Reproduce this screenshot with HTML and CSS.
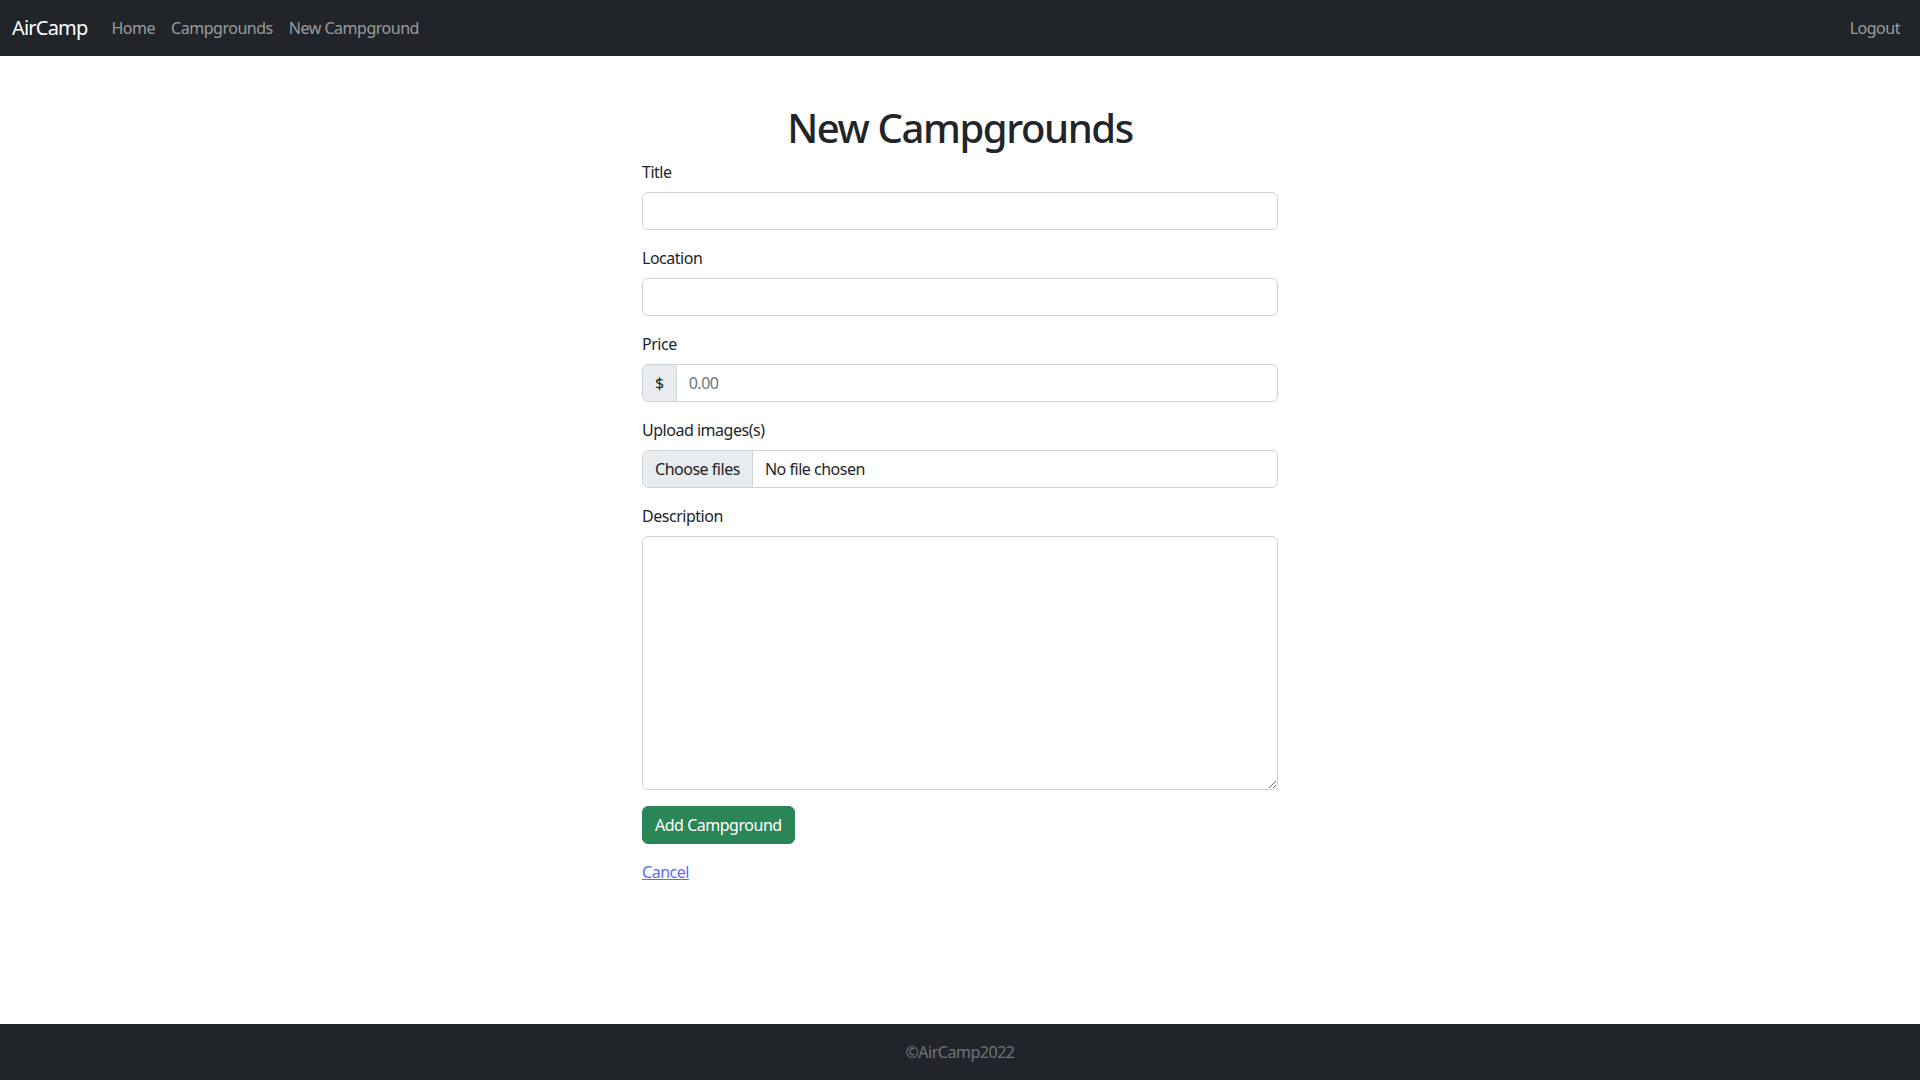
FILE: index.html
```html
<!DOCTYPE html>
<html lang="en">
<head>
<meta charset="utf-8">
<title>AirCamp</title>
<link rel="stylesheet" href="styles.css">
</head>
<body>
<nav class="navbar">
  <div class="navbar-inner">
    <a class="brand" href="#">AirCamp</a>
    <div class="nav-links">
      <a class="nav-link" href="#">Home</a>
      <a class="nav-link" href="#">Campgrounds</a>
      <a class="nav-link" href="#">New Campground</a>
    </div>
    <div class="nav-right">
      <a class="nav-link" href="#">Logout</a>
    </div>
  </div>
</nav>
<main class="main">
  <div class="col">
    <h1 class="heading">New Campgrounds</h1>
    <form class="form">
      <div class="group">
        <label class="label" for="title">Title</label>
        <input class="control" id="title" type="text">
      </div>
      <div class="group">
        <label class="label" for="location">Location</label>
        <input class="control" id="location" type="text">
      </div>
      <div class="group">
        <label class="label" for="price">Price</label>
        <div class="input-group">
          <span class="addon">$</span>
          <input class="control control-joined" id="price" type="text" placeholder="0.00">
        </div>
      </div>
      <div class="group">
        <label class="label">Upload images(s)</label>
        <div class="file-input">
          <span class="file-btn">Choose files</span>
          <span class="file-text">No file chosen</span>
        </div>
      </div>
      <div class="group">
        <label class="label" for="description">Description</label>
        <textarea class="control textarea" id="description" rows="10"></textarea>
      </div>
      <div class="group">
        <button class="btn-success" type="button">Add Campground</button>
      </div>
    </form>
    <a class="cancel" href="#">Cancel</a>
  </div>
</main>
<footer class="footer">
  <span class="footer-text">©AirCamp2022</span>
</footer>
</body>
</html>
```
FILE: styles.css
```css
* { box-sizing: border-box; }
html, body { margin: 0; padding: 0; }
body {
  font-family: "Noto Sans", "Open Sans", sans-serif;
  font-size: 16px;
  line-height: 1.5;
  letter-spacing: -0.03em;
  color: #212529;
  background: #fff;
  min-height: 100vh;
  display: flex;
  flex-direction: column;
}
a { text-decoration: none; }

.navbar {
  background: #212529;
  padding: 8px 0;
}
.navbar-inner {
  display: flex;
  align-items: center;
  padding: 0 12px;
}
.brand {
  color: #fff;
  font-size: 20px;
  line-height: 30px;
  padding: 5px 0;
  margin-right: 16px;
  letter-spacing: -0.04em;
}
.nav-links { display: flex; }
.nav-right { margin-left: auto; display: flex; }
.nav-link {
  color: rgba(255,255,255,.55);
  padding: 8px;
  line-height: 24px;
}

.main {
  flex: 1 0 auto;
  margin-top: 48px;
  display: flex;
  justify-content: center;
}
.col {
  width: 636px;
}
.heading {
  font-size: 40px;
  font-weight: 500;
  line-height: 1.2;
  margin: 0 0 8px;
  text-align: center;
  letter-spacing: -0.035em;
}
.form { margin: 0; }
.group { margin-bottom: 16px; display: flex; flex-direction: column; }
.label {
  display: block;
  margin-bottom: 8px;
  line-height: 24px;
}
.control {
  display: block;
  width: 100%;
  height: 38px;
  padding: 6px 12px;
  font: inherit;
  font-size: 16px;
  line-height: 24px;
  letter-spacing: inherit;
  color: #212529;
  background: #fff;
  border: 1px solid #ced4da;
  border-radius: 6px;
  outline: none;
}
.control::placeholder { color: #6c757d; }
.textarea {
  height: 254px;
  resize: vertical;
}
.input-group { display: flex; }
.addon {
  padding: 6px 12px;
  line-height: 24px;
  background: #e9ecef;
  border: 1px solid #ced4da;
  border-radius: 6px 0 0 6px;
  color: #212529;
}
.control-joined {
  flex: 1;
  margin-left: -1px;
  border-radius: 0 6px 6px 0;
}
.file-input {
  display: flex;
  height: 38px;
  border: 1px solid #ced4da;
  border-radius: 6px;
  overflow: hidden;
}
.file-btn {
  padding: 6px 12px;
  line-height: 24px;
  background: #e9ecef;
  border-right: 1px solid #ced4da;
  color: #212529;
}
.file-text {
  padding: 6px 12px;
  line-height: 24px;
  color: #212529;
}
.btn-success {
  align-self: flex-start;
  font: inherit;
  font-size: 16px;
  line-height: 24px;
  letter-spacing: inherit;
  padding: 6px 12px;
  color: #fff;
  background: #2b8657;
  border: 1px solid #2b8657;
  border-radius: 6px;
  cursor: pointer;
}
.cancel {
  color: #5b6cf8;
  text-decoration: underline;
  line-height: 24px;
}

.footer {
  background: #212529;
  padding: 16px 0;
  text-align: center;
  line-height: 24px;
}
.footer-text { color: #6c757d; }
```
